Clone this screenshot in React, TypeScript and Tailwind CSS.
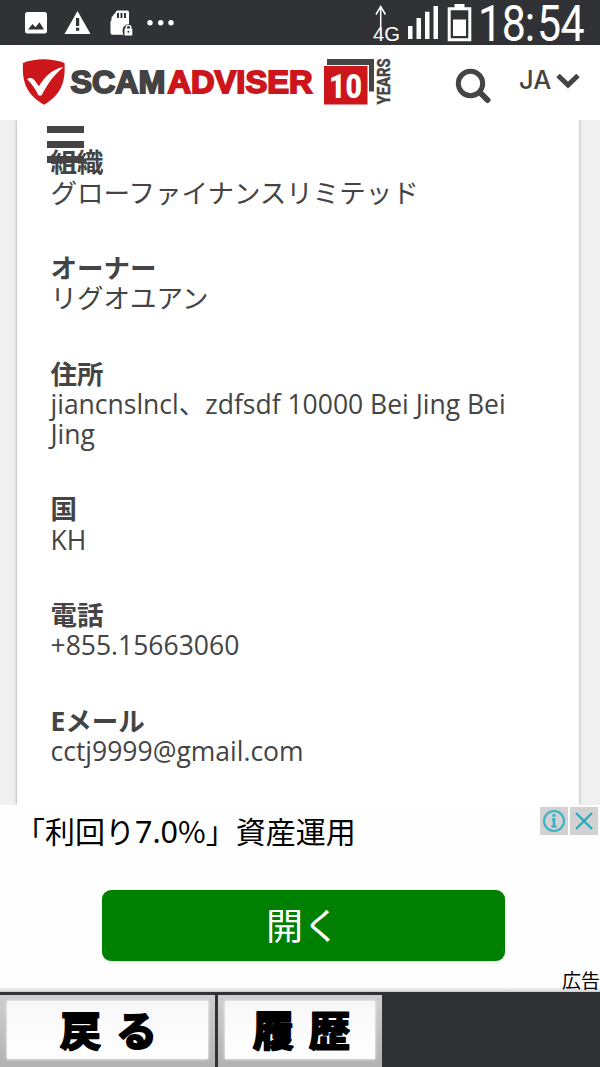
import React from 'react';

interface WhoisEntry {
  label: string;
  value: string;
}

const entries: WhoisEntry[] = [
  { label: '組織', value: 'グローファイナンスリミテッド' },
  { label: 'オーナー', value: 'リグオユアン' },
  { label: '住所', value: 'jiancnslncl、zdfsdf 10000 Bei Jing Bei Jing' },
  { label: '国', value: 'KH' },
  { label: '電話', value: '+855.15663060' },
  { label: 'Eメール', value: 'cctj9999@gmail.com' }
];

const StatusBar: React.FC = () => (
  <div className="h-[45px] shrink-0 bg-[#313236]">
    <svg width="600" height="45" viewBox="0 0 600 45" fill="#fff">
      {/* Picture */}
      <rect x="25" y="12" width="22" height="21.5" rx="2.5" />
      <path d="M28 29.5l4.5-5.5 3 3.2 4-5 4.5 7.3z" fill="#313236" />
      {/* Warning */}
      <path d="M77.5 11L90.5 34h-26z" />
      <path d="M76 18h3.2v8H76zM76 27.8h3.2v3H76z" fill="#313236" />
      {/* SD card with lock */}
      <path d="M117 10.5h10.5q1.5 0 1.5 1.5v12q-6.5 1-6.5 6.5 0 2 1 4.300h-11q-2 0-2-2V21.500l1-1.500v-2.500z" />
      <path d="M117 13h2v5h-2zM120.500 13h2v5h-2zM124 13h2v5h-2z" fill="#313236" />
      <rect x="124.500" y="28.500" width="7.800" height="7" rx="0.500" />
      <path d="M126.200 29v-1.300a2.300 2.300 0 0 1 4.600 0V29" fill="none" stroke="#fff" strokeWidth="1.400" />
      <circle cx="128.400" cy="31.800" r="1" fill="#313236" />
      {/* More */}
      <circle cx="150" cy="22.700" r="2.700" />
      <circle cx="160.700" cy="22.700" r="2.700" />
      <circle cx="171" cy="22.700" r="2.700" />
      {/* Network */}
      <path d="M380.700 27V7M376 14.500l4.700-8 4.700 8" fill="none" stroke="#fff" strokeWidth="1.500" />
      <text x="373" y="41" fontFamily="Liberation Sans, sans-serif" fontSize="20.500" textLength="27" lengthAdjust="spacingAndGlyphs">4G</text>
      <path d="M408 26h4.500v13H408zM416.500 18h4.500v21h-4.500zM425 11.700h4.500V39H425zM433.500 6h4.500v33h-4.500z" />
      {/* Battery */}
      <path d="M454.500 4h10v4h-10z" />
      <path d="M449.200 8.700h20.600v31h-20.600z" fill="none" stroke="#fff" strokeWidth="3" />
      <path d="M453 19.500h13V36h-13z" />
      {/* Clock, condensed */}
      <text
        transform="translate(478 41) scale(0.86 1)"
        x="0 27.500 54.500 68.500 96"
        y="0"
        fontFamily="Roboto, sans-serif"
        fontSize="50"
        fontWeight="400"
      >
        18:54
      </text>
    </svg>
  </div>
);

const Logo: React.FC = () => (
  <svg width="380" height="75" viewBox="20 45 380 75" className="ml-5">
    <path d="M23 63Q43 55.500 64.500 63C65.500 81 62 94 44 104.700 25.500 94 22 81 23 63z" fill="#cc161b" />
    <path d="M27 79c3-1.800 5.500-1.200 7.500 1.200l4.500 6C44 78 51.500 69 63.500 67 54 75 48 83 41.500 95.500h-3C36 90 32 84 27 79z" fill="#fff" />
    <g fontFamily="Liberation Sans, sans-serif" fontSize="30.500" fontWeight="700" strokeWidth="1.800">
      <text x="70.500" y="93" fill="#434343" stroke="#434343" textLength="95" lengthAdjust="spacingAndGlyphs">SCAM</text>
      <text x="167.500" y="93" fill="#cc161b" stroke="#cc161b" textLength="145" lengthAdjust="spacingAndGlyphs">ADVISER</text>
    </g>
    <path d="M327 59h47v32.500h-5V65h-42z" fill="#444" />
    <path d="M324 66h43.500v38.500H324z" fill="#cc161b" />
    <text x="329" y="97.500" fontFamily="Roboto, sans-serif" fontSize="34" fontWeight="900" fill="#fff" textLength="33" lengthAdjust="spacingAndGlyphs">10</text>
    <text transform="translate(390 104.500) rotate(-90)" fontFamily="Roboto, sans-serif" fontSize="17.500" fontWeight="700" fill="#444" stroke="#444" strokeWidth="0.400" textLength="46" lengthAdjust="spacingAndGlyphs">YEARS</text>
  </svg>
);

const Header: React.FC = () => (
  <header className="relative z-10 flex h-[75px] shrink-0 bg-white">
    <Logo />
    <svg width="42" height="75" viewBox="450 45 42 75" className="ml-[50px]" fill="none" stroke="#444">
      <circle cx="470.500" cy="83.500" r="12.200" strokeWidth="5" />
      <path d="M480 92.500l7.500 7.500" strokeWidth="6" strokeLinecap="round" />
    </svg>
    <div className="ml-[27px] flex h-[70px] items-center text-[#444]">
      <span className="w-[37px] font-['Inter',sans-serif] text-[25.5px] font-medium">JA</span>
      <svg width="24" height="18" viewBox="0 0 24 18" fill="none" stroke="#444" strokeWidth="5">
        <path d="M2 4.500l10 9.500 10-9.500" />
      </svg>
    </div>
    {/* Menu button hangs below the header */}
    <div className="absolute top-[81px] left-[47px] flex w-[37px] flex-col gap-2">
      <div className="h-[7px] bg-[#444]" />
      <div className="h-[7px] bg-[#444]" />
      <div className="h-[7px] bg-[#444]" />
    </div>
  </header>
);

const AdBanner: React.FC = () => (
  <section className="relative flex h-[187px] shrink-0 flex-col items-center bg-[#fefefe] text-black">
    <p className="mt-[3px] h-[44px] w-full pl-[15px] text-[30px] leading-[44px]">
      「利回り<span className="font-['Noto_Sans',sans-serif] text-[30.5px]">7.0</span>
      <span className="font-['Noto_Sans_CJK_JP',sans-serif]">%</span>」資産運用
    </p>
    <button type="button" className="mt-[38px] mr-[-7px] h-[71px] w-[403px] rounded-[9px] bg-[#008000] pr-px text-[37px] leading-[66px] text-white shadow-sm">
      開く
    </button>
    <div className="absolute top-[2px] right-[2px] flex gap-[2px]">
      <div className="flex size-7 items-center justify-center bg-[#d2d2d2]">
        <svg width="24" height="24" viewBox="0 0 24 24" fill="none" stroke="#3ab0c4" strokeWidth="2">
          <circle cx="12" cy="12" r="10" />
          <path d="M10 10.500h2v6.500M9.500 17.500h5" strokeWidth="2.500" />
          <circle cx="12" cy="6.500" r="0.800" />
        </svg>
      </div>
      <div className="flex size-7 items-center justify-center bg-[#d2d2d2]">
        <svg width="20" height="20" viewBox="0 0 20 20" stroke="#25a9c0" strokeWidth="2.200">
          <path d="M2 2l16 16M18 2L2 18" />
        </svg>
      </div>
    </div>
    <span className="absolute right-0 bottom-px text-[19px] leading-[20px]">広告</span>
    <div className="absolute bottom-0 h-[5px] w-full bg-linear-to-b from-transparent to-black/20" />
  </section>
);

const NavLabel: React.FC<{ first: string; second: string }> = ({ first, second }) => (
  <svg
    width="100"
    height="58"
    viewBox="0 0 100 58"
    fontFamily="Noto Sans CJK JP, sans-serif"
    fontSize="41"
    fontWeight="700"
    stroke="#000"
    strokeWidth="2.200"
    strokeLinejoin="round"
  >
    <text x="1" y="45">{first}</text>
    <text x="57" y="45">{second}</text>
  </svg>
);

const BottomBar: React.FC = () => (
  <nav className="flex h-[75px] shrink-0 gap-[3px] bg-[#313236] pt-[3px]">
    <button type="button" className="w-[215px] bg-linear-to-b from-[#cfcfcf] to-[#b2b2b2] px-[7px] pt-[6px] pb-[8px]">
      <span className="flex h-[58px] justify-center bg-linear-to-b from-[#f7f7f7] to-white pl-[3px] shadow-[0_0_3px_#fff]">
        <NavLabel first="戻" second="る" />
      </span>
    </button>
    <button type="button" className="w-[164px] bg-linear-to-b from-[#cfcfcf] to-[#b2b2b2] px-[7px] pt-[6px] pb-[8px]">
      <span className="flex h-[58px] justify-center bg-linear-to-b from-[#f7f7f7] to-white pl-[4px] shadow-[0_0_3px_#fff]">
        <NavLabel first="履" second="歴" />
      </span>
    </button>
  </nav>
);

const App: React.FC = () => {
  return (
    <div className="flex h-[1067px] w-[600px] flex-col overflow-hidden bg-white font-['Open_Sans','Noto_Sans_CJK_JP',sans-serif]">
      <StatusBar />
      <Header />
      <main className="flex h-[685px] shrink-0 bg-[#f0f0f0] px-[17px]">
        <dl className="flex w-[562px] flex-col gap-[45px] bg-white pt-[27.4px] pr-[50px] pl-[33.5px] text-[26.5px] leading-[30.3px] text-[#444] shadow-[0_0_3px_#999]">
          {entries.map((entry) => (
            <div key={entry.label}>
              <dt className="h-[30.3px] font-bold">{entry.label}</dt>
              <dd>{entry.value}</dd>
            </div>
          ))}
        </dl>
      </main>
      <AdBanner />
      <BottomBar />
    </div>
  );
};

export default App;
